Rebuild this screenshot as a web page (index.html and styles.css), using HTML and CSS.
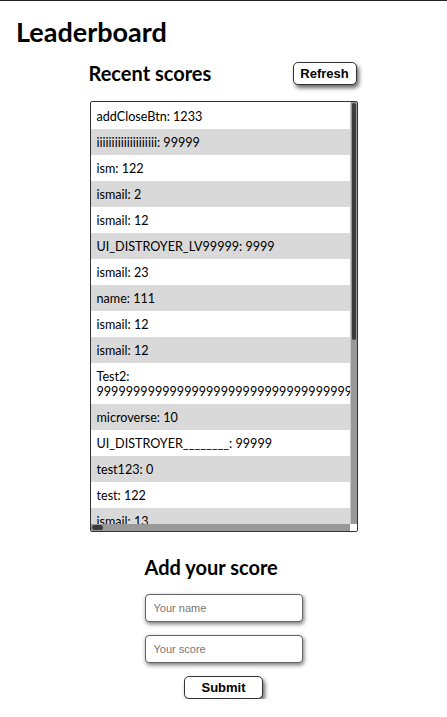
FILE: index.html
```html
<!DOCTYPE html>
<html lang="en">
<head>
<meta charset="utf-8">
<title>Leaderboard</title>
<link rel="stylesheet" href="styles.css">
</head>
<body>
<header class="top">
  <h1 class="title">Leaderboard</h1>
</header>
<main class="main">
  <section class="recent">
    <div class="recent-head">
      <h2 class="sub">Recent scores</h2>
      <button class="btn refresh" type="button">Refresh</button>
    </div>
    <div class="listbox">
      <ul class="list">
        <li>addCloseBtn: 1233</li>
        <li>iiiiiiiiiiiiiiiiiiii: 99999</li>
        <li>ism: 122</li>
        <li>ismail: 2</li>
        <li>ismail: 12</li>
        <li>UI_DISTROYER_LV99999: 9999</li>
        <li>ismail: 23</li>
        <li>name: 111</li>
        <li>ismail: 12</li>
        <li>ismail: 12</li>
        <li>Test2: 99999999999999999999999999999999999999999999999999999999999999</li>
        <li>microverse: 10</li>
        <li>UI_DISTROYER________: 99999</li>
        <li>test123: 0</li>
        <li>test: 122</li>
        <li>ismail: 13</li>
      </ul>
      <div class="vbar"><div class="vthumb"></div></div>
      <div class="hbar"><div class="hthumb"></div></div>
      <div class="corner"></div>
    </div>
  </section>
  <section class="add">
    <h2 class="sub">Add your score</h2>
    <form class="form">
      <input class="field" type="text" placeholder="Your name">
      <input class="field" type="text" placeholder="Your score">
      <button class="btn submit" type="button">Submit</button>
    </form>
  </section>
</main>
</body>
</html>
```

FILE: styles.css
```css
html, body {
  margin: 0;
  padding: 0;
  background: #fff;
}

body {
  border-top: 1px solid #222;
  font-family: "Lato", "DejaVu Sans", sans-serif;
  color: #000;
}

.top {
  padding: 0 16px;
}

.title {
  margin: 0;
  padding-top: 15px;
  font-size: 27px;
  line-height: 32px;
  font-weight: 700;
}

.main {
  display: flex;
  flex-direction: column;
  align-items: center;
}

.recent {
  width: 268px;
  margin-top: 12px;
}

.recent-head {
  display: flex;
  justify-content: space-between;
  align-items: center;
  height: 26px;
}

.sub {
  margin: 0;
  font-size: 20px;
  font-weight: 700;
  line-height: 26px;
  white-space: nowrap;
}

.recent .sub {
  margin-left: -1px;
}

.btn {
  background: #fff;
  border: 1px solid #333;
  border-radius: 5px;
  box-shadow: 2px 3px 4px rgba(0, 0, 0, 0.6);
  font-family: "Liberation Sans", Arial, sans-serif;
  font-weight: 700;
  font-size: 13px;
  color: #000;
  padding: 0;
  cursor: pointer;
}

.refresh {
  width: 64px;
  height: 23px;
  margin-right: 1px;
}

.listbox {
  margin-top: 15px;
  height: 429px;
  border: 1px solid #333;
  border-radius: 2px;
  display: grid;
  grid-template-columns: 1fr 7px;
  grid-template-rows: 1fr 7px;
  overflow: hidden;
}

.list {
  list-style: none;
  margin: 0;
  padding: 1px 0 0;
  overflow: hidden;
  font-size: 12.6px;
  line-height: 15px;
}

.list li {
  padding: 5.5px 6px;
  white-space: nowrap;
}

.list li:nth-child(11) {
  white-space: normal;
}

.list li:nth-child(even) {
  background: #d9d9d9;
}

.vbar {
  background: #999;
  border-left: 1px solid #c8c8c8;
  padding: 1px 1px 0 1px;
}

.vthumb {
  height: 237px;
  background: #3c3c3c;
  border-radius: 3px;
}

.hbar {
  background: #999;
  padding: 1px 0 1px 1px;
}

.hthumb {
  width: 11px;
  height: 100%;
  background: #3c3c3c;
  border-radius: 3px;
}

.corner {
  background: #fff;
}

.add {
  width: 158px;
  margin-top: 22px;
  display: flex;
  flex-direction: column;
}

.form {
  margin-top: 14px;
  display: flex;
  flex-direction: column;
  align-items: center;
  gap: 13px;
}

.field {
  box-sizing: border-box;
  width: 158px;
  height: 28px;
  border: 1px solid #666;
  border-radius: 4px;
  box-shadow: 1px 2px 4px rgba(0, 0, 0, 0.55);
  padding: 0 8px;
  font-family: "Liberation Sans", Arial, sans-serif;
  font-size: 11px;
  color: #000;
}

.field::placeholder {
  color: #777;
}

.submit {
  width: 79px;
  height: 23px;
}
```
